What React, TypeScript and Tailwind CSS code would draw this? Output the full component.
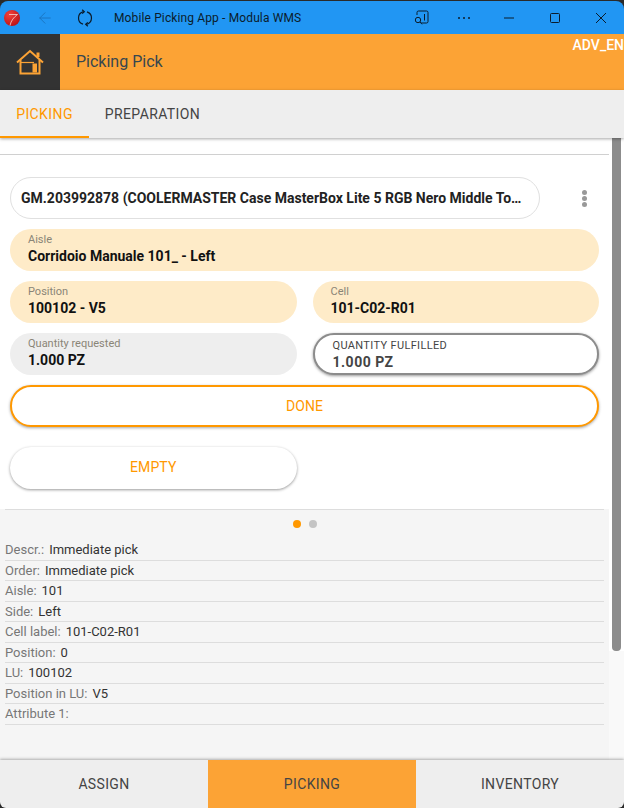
import { ArrowLeft } from "lucide-react";

const details = [
  { label: "Descr.:", value: "Immediate pick" },
  { label: "Order:", value: "Immediate pick" },
  { label: "Aisle:", value: "101" },
  { label: "Side:", value: "Left" },
  { label: "Cell label:", value: "101-C02-R01" },
  { label: "Position:", value: "0" },
  { label: "LU:", value: "100102" },
  { label: "Position in LU:", value: "V5" },
  { label: "Attribute 1:", value: "" },
];

function ReadOnlyField({
  label,
  value,
  className,
}: {
  label: string;
  value: string;
  className: string;
}) {
  return (
    <div className={`flex h-[42px] flex-col rounded-[21px] pt-[4px] pl-[18px] ${className}`}>
      <span className="text-[11px] leading-[13px] text-[#8a8577]">{label}</span>
      <span className="text-sm leading-[20px] font-bold text-[#111]">{value}</span>
    </div>
  );
}

function Logo() {
  return (
    <svg className="ml-[4px]" width="16" height="16" viewBox="0 0 16 16">
      <defs>
        <radialGradient id="logo-red" cx="0.35" cy="0.3" r="0.8">
          <stop offset="0" stopColor="#f4423c" />
          <stop offset="1" stopColor="#b80f12" />
        </radialGradient>
      </defs>
      <circle cx="8" cy="8" r="8" fill="url(#logo-red)" />
      <path d="M5 4.500h8.500C10 7 7 10.500 6 15.500" fill="none" stroke="#f6d5cf" strokeWidth="0.8" />
    </svg>
  );
}

function TitleBar() {
  return (
    <div className="flex h-[33px] shrink-0 items-center rounded-t-[8px] bg-[#2196f3]">
      <Logo />
      <ArrowLeft className="ml-[16px] size-[18px] text-[#1a74c0]" strokeWidth={1.25} />
      <svg
        className="ml-[22px] text-[#0b1c2c]"
        width="18"
        height="18"
        viewBox="0 0 18 18"
        fill="none"
        stroke="currentColor"
        strokeWidth="1.200"
      >
        <path d="M11 2.900A6.500 6.500 0 0 1 10.500 15.400" />
        <path d="M7 15.100A6.500 6.500 0 0 1 7.500 2.600" />
        <path d="M6.200 0.800L8.300 2.700L6.200 4.600" />
        <path d="M11.800 13.400L9.700 15.300L11.800 17.200" />
      </svg>
      <span className="ml-[20px] text-[12px] tracking-[0.13px] text-[#0b1c2c]">
        Mobile Picking App - Modula WMS
      </span>
      <div className="ml-auto flex items-center text-[#0b1c2c]">
        <svg width="16" height="16" viewBox="0 0 16 16" fill="none" stroke="currentColor" strokeWidth="1">
          <path d="M3 5V2.500A1.500 1.500 0 0 1 4.500 1h8A1.500 1.500 0 0 1 14 2.500v9a1.500 1.500 0 0 1-1.500 1.500H7" />
          <path d="M10.500 4v6.500" />
          <circle cx="4" cy="10" r="2.700" />
          <path d="M6 12l2 2.300" />
        </svg>
        <svg className="ml-[27px]" width="14" height="4" viewBox="0 0 14 4" fill="currentColor">
          <circle cx="2" cy="2" r="1" />
          <circle cx="7" cy="2" r="1" />
          <circle cx="12" cy="2" r="1" />
        </svg>
        <svg className="ml-[33px]" width="10" height="2" viewBox="0 0 10 2" fill="currentColor">
          <rect width="10" height="1" y="0.500" />
        </svg>
        <svg className="ml-[36px]" width="10" height="10" viewBox="0 0 10 10" fill="none" stroke="currentColor">
          <rect x="0.500" y="0.500" width="9" height="9" rx="1" />
        </svg>
        <svg className="mr-[18px] ml-[36px]" width="10" height="10" viewBox="0 0 10 10" fill="none" stroke="currentColor">
          <path d="M0 0l10 10M10 0L0 10" />
        </svg>
      </div>
    </div>
  );
}

export default function App() {
  return (
    <div
      className="flex h-[808px] w-[624px] flex-col bg-[#2a2a2a] pt-px"
      style={{ fontFamily: "Roboto, 'Liberation Sans', sans-serif" }}
    >
      <TitleBar />

      <div className="flex h-[56px] shrink-0 overflow-hidden bg-[#fca335]">
        <div className="flex w-[60px] items-center justify-center bg-[#333333]">
          <svg width="28" height="26" viewBox="0 0 28 26" fill="none" stroke="#fca335" strokeWidth="2">
            <path d="M1 13.500L14 2l13 11.500" />
            <path d="M22 8V3.500" strokeWidth="3" />
            <path d="M4.500 11V24.500H23.500V11" />
            <path d="M4.500 13.500H18" strokeWidth="1.200" />
            <rect x="16.500" y="14.500" width="4.500" height="9" fill="#fca335" stroke="none" />
          </svg>
        </div>
        <span className="ml-4 self-center text-base text-[#37474f]">Picking Pick</span>
        <span className="ml-auto pt-[3px] text-sm leading-4 font-medium whitespace-nowrap text-white">
          ADV_EN
        </span>
      </div>

      <div className="z-10 flex h-[48px] shrink-0 bg-[#eeeeee] shadow-[0_1px_3px_rgba(0,0,0,0.35)]">
        <div className="flex w-[89px] items-center justify-center border-b-2 border-[#ff9800] pt-[2px] text-sm tracking-[0.4px] text-[#ff9800]">
          PICKING
        </div>
        <div className="flex w-[127px] items-center justify-center text-sm tracking-[0.4px] text-[#444]">
          PREPARATION
        </div>
      </div>

      <div className="flex min-h-0 flex-1 bg-white">
        <main className="flex w-[609px] flex-col">
          <div className="mt-[16px] h-px bg-[#d0d0d0]" />

          <div className="flex flex-col gap-[10px] px-[10px] pt-[22px]">
            <div className="flex items-center">
              <div className="flex h-[42px] w-[530px] items-center rounded-[21px] border border-[#e0e0e0] pr-[14px] pl-[10px]">
                <span className="truncate text-sm font-bold text-[#222]">
                  GM.203992878 (COOLERMASTER Case MasterBox Lite 5 RGB Nero Middle Tower Window)
                </span>
              </div>
              <div className="ml-[42px] flex flex-col gap-[1px]">
                <span className="size-[5px] rounded-full bg-[#999]" />
                <span className="size-[5px] rounded-full bg-[#999]" />
                <span className="size-[5px] rounded-full bg-[#999]" />
              </div>
            </div>

            <ReadOnlyField label="Aisle" value="Corridoio Manuale 101_ - Left" className="bg-[#feebc8]" />

            <div className="grid grid-cols-2 gap-[16px]">
              <ReadOnlyField label="Position" value="100102 - V5" className="bg-[#feebc8]" />
              <ReadOnlyField label="Cell" value="101-C02-R01" className="bg-[#feebc8]" />
            </div>

            <div className="grid grid-cols-2 gap-[16px]">
              <ReadOnlyField label="Quantity requested" value="1.000 PZ" className="bg-[#eeeeee]" />
              <div className="flex h-[42px] flex-col rounded-[21px] border-2 border-[#8c8c8c] bg-white pt-[4px] pl-[18px] shadow-[0_1px_3px_rgba(0,0,0,0.4)]">
                <span className="text-[11px] leading-[13px] tracking-[0.35px] text-[#444]">QUANTITY FULFILLED</span>
                <span className="text-sm leading-[20px] font-bold tracking-[0.5px] text-[#444]">1.000 PZ</span>
              </div>
            </div>

            <button
              type="button"
              className="h-[42px] rounded-[21px] border-2 border-[#ff9800] bg-white text-sm text-[#ff9800] shadow-[0_1px_3px_rgba(0,0,0,0.35)]"
            >
              DONE
            </button>

            <div className="grid grid-cols-2 gap-[16px] pt-[10px] pb-[20px]">
              <button
                type="button"
                className="h-[42px] rounded-[21px] bg-white pb-[2px] text-sm tracking-[0.1px] text-[#ff9800] shadow-[0_1px_3px_rgba(0,0,0,0.4)]"
              >
                EMPTY
              </button>
            </div>
          </div>

          <div className="flex min-h-0 flex-1 flex-col bg-[#f5f5f5] px-[5px]">
            <div className="h-px bg-[#dddddd]" />
            <div className="flex justify-center gap-[8px] pt-[10px] pb-[12px]">
              <span className="size-2 rounded-full bg-[#ff9800]" />
              <span className="size-2 rounded-full bg-[#c4c4c4]" />
            </div>
            {details.map((d) => (
              <div
                key={d.label}
                className="flex h-[20.5px] items-center gap-[5px] border-b border-[#dddddd] text-[13px]"
              >
                <span className="text-[#777]">{d.label}</span>
                <span className="text-[#333]">{d.value}</span>
              </div>
            ))}
          </div>
        </main>

        <aside className="flex w-[15px] flex-col bg-[#f9f9f9]">
          <div className="h-[513px] bg-white pl-[3px]">
            <div className="h-full w-[9px] rounded-b-[4px] bg-[#8c8c8c]" />
          </div>
        </aside>
      </div>

      <nav className="z-10 grid h-[48px] shrink-0 grid-cols-3 overflow-hidden rounded-b-[6px] bg-[#eeeeee] text-sm tracking-[0.35px] text-[#444] shadow-[0_-1px_3px_rgba(0,0,0,0.3)]">
        <div className="flex items-center justify-center">ASSIGN</div>
        <div className="flex items-center justify-center bg-[#fca335]">PICKING</div>
        <div className="flex items-center justify-center">INVENTORY</div>
      </nav>
    </div>
  );
}
